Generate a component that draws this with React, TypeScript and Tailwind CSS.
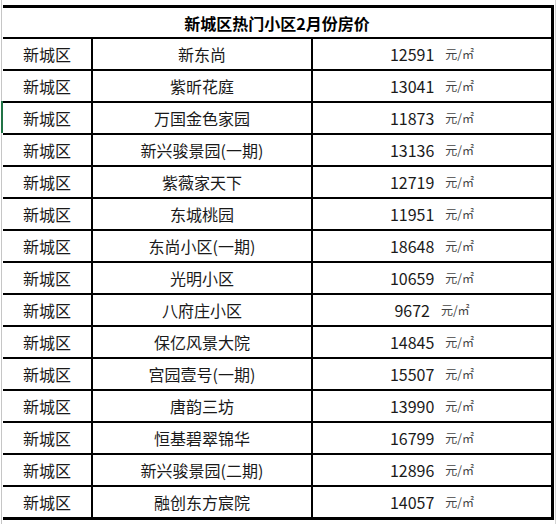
import React from "react";

const rows: [string, string, string][] = [
  ["新城区", "新东尚", "12591"],
  ["新城区", "紫昕花庭", "13041"],
  ["新城区", "万国金色家园", "11873"],
  ["新城区", "新兴骏景园(一期)", "13136"],
  ["新城区", "紫薇家天下", "12719"],
  ["新城区", "东城桃园", "11951"],
  ["新城区", "东尚小区(一期)", "18648"],
  ["新城区", "光明小区", "10659"],
  ["新城区", "八府庄小区", "9672"],
  ["新城区", "保亿风景大院", "14845"],
  ["新城区", "宫园壹号(一期)", "15507"],
  ["新城区", "唐韵三坊", "13990"],
  ["新城区", "恒基碧翠锦华", "16799"],
  ["新城区", "新兴骏景园(二期)", "12896"],
  ["新城区", "融创东方宸院", "14057"],
];

export default function App() {
  return (
    <div
      className="w-[558px] h-[524px] bg-white overflow-hidden flex text-[#1a1a1a]"
      style={{ fontFamily: '"Noto Sans CJK SC", "Noto Sans", sans-serif' }}
    >
      {/* sheet gridline on the left, with the selected-row marker */}
      <div className="w-[3px] pl-[1px] flex">
        <div className="w-[2px] flex flex-col">
          <div className="h-[101px] border-l border-[#c6c6c6]" />
          <div className="h-[32px] bg-[#217346]" />
          <div className="flex-1 border-l border-[#c6c6c6]" />
        </div>
      </div>

      <div className="pt-[5px]">
        <div className="w-[551px] border-t-[3px] border-r-[3px] border-b-[3px] border-black">
          <div className="h-[31px] border-b-2 border-black flex items-center justify-center text-[16px] font-bold text-black">
            新城区热门小区2月份房价
          </div>
          {rows.map(([district, name, price], i) => (
            <div
              key={name}
              className={
                i === rows.length - 1
                  ? "h-[30px] flex"
                  : "h-[32px] flex border-b-2 border-black"
              }
            >
              <div className="w-[90px] border-r-2 border-black flex items-center justify-center text-[16px]">
                {district}
              </div>
              <div className="w-[220px] border-r-2 border-black flex items-center justify-center text-[16px]">
                {name}
              </div>
              <div className="flex-1 flex items-center justify-center gap-[11px]">
                <span className="text-[16px]">{price}</span>
                <span className="text-[12px] text-[#444]">元/㎡</span>
              </div>
            </div>
          ))}
        </div>
      </div>

      {/* sheet gridline on the right */}
      <div className="ml-[1px] w-px bg-[#d4d4d4]" />
    </div>
  );
}
